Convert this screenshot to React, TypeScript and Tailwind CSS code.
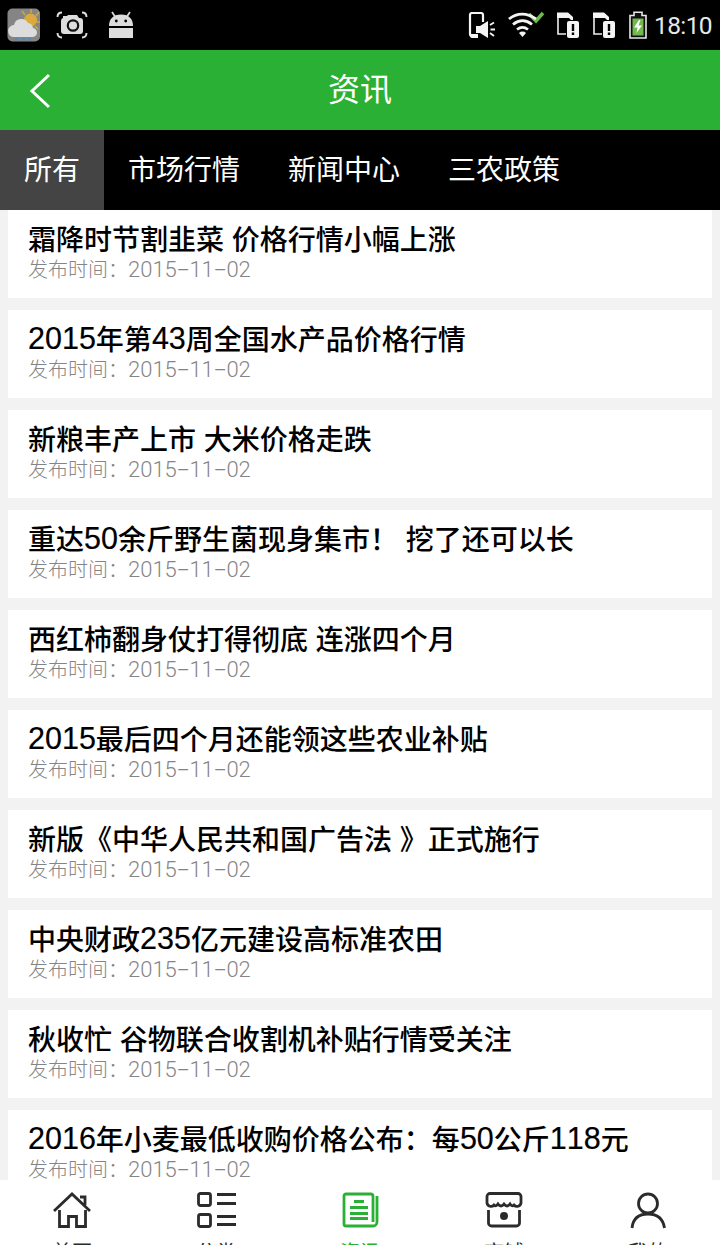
import type { ReactNode } from "react";

const tabs = ["所有", "市场行情", "新闻中心", "三农政策"];

const articles = [
  { title: "霜降时节割韭菜 价格行情小幅上涨", date: "2015-11-02" },
  { title: "2015年第43周全国水产品价格行情", date: "2015-11-02" },
  { title: "新粮丰产上市 大米价格走跌", date: "2015-11-02" },
  { title: "重达50余斤野生菌现身集市！ 挖了还可以长", date: "2015-11-02" },
  { title: "西红柿翻身仗打得彻底 连涨四个月", date: "2015-11-02" },
  { title: "2015最后四个月还能领这些农业补贴", date: "2015-11-02" },
  { title: "新版《中华人民共和国广告法 》正式施行", date: "2015-11-02" },
  { title: "中央财政235亿元建设高标准农田", date: "2015-11-02" },
  { title: "秋收忙 谷物联合收割机补贴行情受关注", date: "2015-11-02" },
  { title: "2016年小麦最低收购价格公布：每50公斤118元", date: "2015-11-02" },
];

function SimIcon() {
  return (
    <svg className="w-[24px] h-[30px]" viewBox="0 0 24 30" fill="none">
      <path d="M2 6V24H10" stroke="#eee" strokeWidth="1.6" />
      <path d="M1 2.500H12L17 7V10H15L13 8H1Z" fill="#f4f4f4" />
      <rect x="11" y="11" width="12" height="17" rx="2" fill="#f4f4f4" />
      <path d="M17 14V21M17 22.500V25" stroke="#000" strokeWidth="2.4" />
    </svg>
  );
}

function StatusBar() {
  return (
    <div className="h-[50px] shrink-0 bg-black flex items-center justify-between pl-[7px] pr-[8px]">
      <div className="flex items-center">
        {/* Weather */}
        <svg className="w-[34px] h-[34px]" viewBox="0 0 34 34" fill="none">
          <rect x="0.5" y="0.5" width="32.5" height="33" rx="5" fill="#858585" />
          <path d="M24 1V5M15 3L18 7M32 4L29 8M33 14H29M31 21L28 18" stroke="#c8a64a" strokeWidth="1.6" />
          <circle cx="23.5" cy="12" r="6.5" fill="#dca93c" />
          <path d="M6 29A6 6 0 0 1 4 18A4 4 0 0 1 7 17A7.5 7.5 0 0 1 21 15A6 6 0 0 1 26 20A4.5 4.5 0 0 1 25 29Z" fill="#dcdcdc" />
          <path d="M8 31H12M15 31H18M21 31H24" stroke="#5f87aa" strokeWidth="2.5" />
        </svg>
        {/* Screenshot */}
        <svg className="w-[32px] h-[28px] ml-[15px]" viewBox="0 0 32 28" fill="none">
          <path d="M1.5 6C1.5 3 3 1.5 6 1.5M26 1.5C29 1.5 30.5 3 30.5 6M1.5 22C1.5 25 3 26.5 6 26.5M26 26.5C29 26.5 30.5 25 30.5 22" stroke="#ddd" strokeWidth="1.9" />
          <path d="M7 5H11L12 4H21L23 7H24A3 3 0 0 1 27 10V20A3 3 0 0 1 24 23H8A3 3 0 0 1 5 20V10A3 3 0 0 1 7 7Z" fill="#ddd" />
          <circle cx="17" cy="14.5" r="5.2" stroke="#111" strokeWidth="2.2" />
        </svg>
        {/* Android */}
        <svg className="w-[26px] h-[28px] ml-[20px]" viewBox="0 0 26 28">
          <path d="M4 1L8 7M22 1L18 7" stroke="#ddd" strokeWidth="1.7" />
          <path d="M1 15C1 8 5 3.5 13 3.5S25 8 25 15Z" fill="#ddd" />
          <path d="M1 17H25V27H1Z" fill="#ddd" />
          <circle cx="8.3" cy="10" r="1.4" fill="#000" />
          <circle cx="17.7" cy="10" r="1.4" fill="#000" />
        </svg>
      </div>
      <div className="flex items-center">
        {/* Phone muted to speaker */}
        <svg className="w-[28px] h-[30px]" viewBox="0 0 28 30" fill="none">
          <path d="M15 12V5A2 2 0 0 0 13 3H4A2 2 0 0 0 2 5V24A2 2 0 0 0 4 26H9" stroke="#f4f4f4" strokeWidth="2.2" />
          <path d="M2 24H10V28H4A2 2 0 0 1 2 26ZM3 2H14V4H3Z" fill="#f4f4f4" />
          <path d="M8 16H12L20 11V28L12 23H8Z" fill="#f4f4f4" />
          <path d="M22 15L26 12.500M22.500 19.500H27M22 23L26 26" stroke="#f4f4f4" strokeWidth="1.8" />
        </svg>
        <svg className="w-[38px] h-[28px] ml-[11px]" viewBox="0 0 38 28" fill="none">
          <path d="M22 3L29 10L36 2" stroke="#6bbd4b" strokeWidth="3.5" />
          <path d="M2 8C10 1.5 20 1.5 29 8M6 13.5C12 8.500 19 8.500 25 13.5M10 18.5C14 15.5 17 15.5 21 18.5" stroke="#f4f4f4" strokeWidth="2.8" />
          <path d="M12 22A5 5 0 0 1 19 22L15.5 26Z" fill="#f4f4f4" />
        </svg>
        <div className="ml-[11px]"><SimIcon /></div>
        <div className="ml-[12px]"><SimIcon /></div>
        <svg className="w-[18px] h-[28px] ml-[13px]" viewBox="0 0 18 28" fill="none">
          <path d="M1 4.5H5V1.2H13V4.5H17V27H1Z" fill="#111" stroke="#e8e8e8" strokeWidth="1.6" />
          <path d="M3.5 7.5H14.5V24.5H3.5Z" fill="#72b84c" />
          <path d="M10 9L5 16.5H8.5L7.5 22L13 14.5H9.5L11.5 9Z" fill="#fff" />
        </svg>
        <span className="ml-[7px] w-[58px] whitespace-nowrap font-[Roboto] text-[24.5px] leading-[30px] text-[#e8e8e8] tracking-[-0.6px] mt-[2px]">
          18:10
        </span>
      </div>
    </div>
  );
}

/* Digits are set a little larger than the Chinese text around them */
function ArticleTitle({ text }: { text: string }) {
  return (
    <h2 className="h-[35px] leading-[37px] text-[28px] font-medium text-black whitespace-nowrap [font-kerning:none]">
      {text.split(/(\d+)/).map((part, i) =>
        /^\d+$/.test(part) ? (
          <span key={i} className="text-[30.5px] leading-none align-[1px] [-webkit-text-stroke:0.2px_black]">{part}</span>
        ) : (
          part
        )
      )}
    </h2>
  );
}

function ArticleDate({ date }: { date: string }) {
  return (
    <p className="h-[26px] leading-[26px] text-[20px] font-light text-[#858585] whitespace-nowrap">
      发布时间：
      <span className="font-[Roboto] text-[22px] leading-none">
        {date.split("-").map((part, i) => (
          <span key={i}>
            {i > 0 && <span className="inline-block w-[12.6px] text-center scale-x-[1.9]">-</span>}
            {part}
          </span>
        ))}
      </span>
    </p>
  );
}

function NavItem({ label, active, children }: { label: string; active?: boolean; children: ReactNode }) {
  return (
    <div className={active ? "flex-1 flex flex-col items-center text-[#2ab034]" : "flex-1 flex flex-col items-center text-[#2b2b2b]"}>
      <svg className="w-[40px] h-[40px] mt-[10px] shrink-0" viewBox="0 0 40 40" fill="none" stroke="currentColor" strokeWidth="2.8">
        {children}
      </svg>
      <span className="mt-[11px] shrink-0 text-[20px] leading-[24px] whitespace-nowrap">{label}</span>
    </div>
  );
}

export default function App() {
  return (
    <div
      lang="zh-CN"
      className="w-[720px] h-[1245px] overflow-hidden flex flex-col bg-[#f2f2f2] font-['Liberation_Sans','Noto_Sans_CJK_SC',sans-serif]"
    >
      <StatusBar />

      {/* Header */}
      <header className="h-[80px] shrink-0 bg-[#2ab034] grid grid-cols-[80px_1fr_80px] items-center text-white">
        <svg className="w-[22px] h-[36px] ml-[29px] mt-[2px]" viewBox="0 0 22 36" fill="none" stroke="currentColor" strokeWidth="3">
          <path d="M20 2L3 18L20 34" />
        </svg>
        <h1 className="text-center text-[32px] leading-[40px]">资讯</h1>
      </header>

      {/* Categories */}
      <nav className="h-[80px] shrink-0 bg-black flex text-white text-[28px] leading-[81px]">
        {tabs.map((tab, i) => (
          <span key={tab} className={i === 0 ? "h-full px-6 bg-[#444]" : "h-full px-6"}>{tab}</span>
        ))}
      </nav>

      {/* Articles */}
      <main className="h-[970px] shrink-0 overflow-hidden px-2 flex flex-col gap-3">
        {articles.map((article) => (
          <article key={article.title} className="h-[88px] shrink-0 bg-white px-5 pt-[12px]">
            <ArticleTitle text={article.title} />
            <ArticleDate date={article.date} />
          </article>
        ))}
      </main>

      {/* Bottom navigation */}
      <footer className="h-[65px] shrink-0 overflow-hidden bg-white flex">
        <NavItem label="首页">
          <path d="M2 21L20 4L38 21M28 7H33V15M7.500 20V36.500H16.500V26.500H24.500V36.500H33.500V20" />
        </NavItem>
        <NavItem label="分类">
          <rect x="2.500" y="3.500" width="12" height="12" rx="2" />
          <rect x="2.500" y="24.500" width="12" height="12" rx="2" />
          <path d="M21 4.500H40M21 13.500H40M21 26.500H40M21 34.500H40" />
        </NavItem>
        <NavItem label="资讯" active>
          <path d="M33 32V6A2 2 0 0 0 31 4H6A2 2 0 0 0 4 6V34A2 2 0 0 0 6 36H33A4 4 0 0 0 37 32V6" />
          <path d="M14 11.500H24M10 17.500H28M10 23.500H28M10 28.500H28" />
        </NavItem>
        <NavItem label="商铺">
          <path d="M6 3.500H34A3 3 0 0 1 37 6.500V13A4 4 0 0 1 30 15Q28 17 26 14Q23 18 20 14Q17 18 14 14Q12 17 10 15A4 4 0 0 1 3 13V6.500A3 3 0 0 1 6 3.500Z" />
          <path d="M4.500 20V33A3 3 0 0 0 7.500 36H32.500A3 3 0 0 0 35.500 33V20" />
          <circle cx="20" cy="26" r="2.600" fill="currentColor" />
        </NavItem>
        <NavItem label="我的">
          <circle cx="20" cy="13.500" r="9.500" />
          <path d="M4 38C5 28.500 11 24 20 24S35 28.500 36.500 38" />
        </NavItem>
      </footer>
    </div>
  );
}
